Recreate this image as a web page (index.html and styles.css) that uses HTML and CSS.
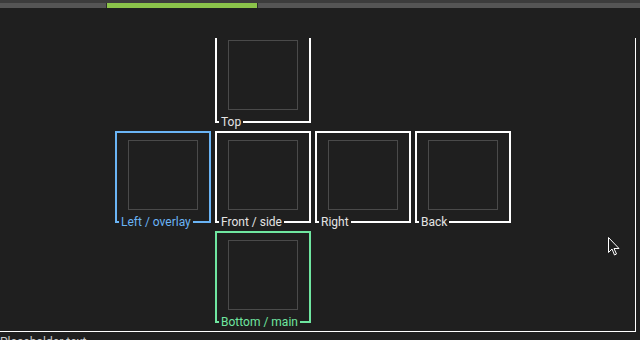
FILE: index.html
```html
<!DOCTYPE html>
<html lang="en">
<head>
    <meta charset="UTF-8">
    <meta name="viewport" content="width=device-width, initial-scale=1.0">
    <title>Cube net</title>
    <link rel="stylesheet" href="styles.css">
</head>
<body>
    <div class="topbar"></div>
    <div class="tabs">
        <div class="tab tab-first"></div>
        <div class="tab tab-active"></div>
        <div class="tab tab-rest"></div>
    </div>

    <div class="workspace"></div>

    <div class="viewport">
        <div class="net">
            <div class="face face-top">
                <div class="slot"></div>
                <span class="face-label">Top</span>
            </div>
            <div class="face face-left">
                <div class="slot"></div>
                <span class="face-label">Left / overlay</span>
            </div>
            <div class="face face-front">
                <div class="slot"></div>
                <span class="face-label">Front / side</span>
            </div>
            <div class="face face-right">
                <div class="slot"></div>
                <span class="face-label">Right</span>
            </div>
            <div class="face face-back">
                <div class="slot"></div>
                <span class="face-label">Back</span>
            </div>
            <div class="face face-bottom">
                <div class="slot"></div>
                <span class="face-label">Bottom / main</span>
            </div>
        </div>
    </div>

    <div class="status">Placeholder text</div>

    <!-- mouse pointer left in the capture -->
    <svg class="cursor" width="14" height="21" viewBox="0 0 14 21">
        <path d="M1.5 1.5 L1.5 16.5 L5 13 L7.5 19 L9.5 18 L7 12.5 L12 12.5 Z" fill="#1f1f1f" stroke="#fff" stroke-width="1" stroke-linejoin="miter"/>
    </svg>
</body>
</html>
```

FILE: styles.css
```css
:root {
    --bg: #1f1f1f;
    --line: #ffffff;
    --slot: #4a4a4a;
    --blue: #6ab4f5;
    --green: #6fe6a0;
    --label: #e4e4e4;
}

body {
    margin: 0;
    width: 640px;
    height: 340px;
    overflow: hidden;
    background-color: var(--bg);
    font-family: Roboto, "Noto Sans", sans-serif;
    position: relative;
}

.topbar {
    height: 3px;
    background-color: #3c3c3c;
}

.tabs {
    display: flex;
    height: 5px;
}

.tab {
    background-color: #555;
}

.tab-first {
    width: 106px;
}

.tab-active {
    width: 150px;
    background-color: #8bc34a;
    border-left: 1px solid #2b2b2b;
    border-right: 1px solid #2b2b2b;
}

.tab-rest {
    flex: 1;
}

.workspace {
    height: 30px;
}

.viewport {
    width: 635px;
    height: 293px;
    border-right: 1px solid var(--line);
    border-bottom: 1px solid var(--line);
    overflow: hidden;
}

.net {
    display: grid;
    grid-template-columns: repeat(4, 96px);
    grid-auto-rows: 92px;
    gap: 8px 4px;
    margin-left: 115px;
    margin-top: -7px;
}

.face {
    position: relative;
    box-sizing: border-box;
    border: 2px solid var(--line);
    display: flex;
    justify-content: center;
    padding-top: 7px;
    color: var(--label);
}

.face-top { grid-column: 2; grid-row: 1; }
.face-left { grid-column: 1; grid-row: 2; border-color: var(--blue); color: var(--blue); }
.face-front { grid-column: 2; grid-row: 2; }
.face-right { grid-column: 3; grid-row: 2; }
.face-back { grid-column: 4; grid-row: 2; }
.face-bottom { grid-column: 2; grid-row: 3; border-color: var(--green); color: var(--green); }

.slot {
    box-sizing: border-box;
    width: 70px;
    height: 70px;
    border: 1px solid var(--slot);
}

.face-label {
    position: absolute;
    left: 2px;
    bottom: -8px;
    padding: 0 2px;
    font-size: 12px;
    line-height: 14px;
    background-color: var(--bg);
    white-space: nowrap;
}

.status {
    padding-top: 3px;
    font-size: 12px;
    line-height: 14px;
    color: #c8c8c8;
}

.cursor {
    position: absolute;
    left: 607px;
    top: 236px;
}
```
